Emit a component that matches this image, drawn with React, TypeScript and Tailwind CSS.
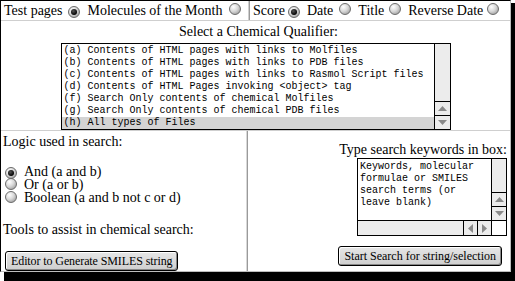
import React from "react";

const serif = { fontFamily: '"Liberation Serif", "Times New Roman", serif' };
const mono = { fontFamily: '"Liberation Mono", "Courier New", monospace' };

function Radio({ checked }: { checked?: boolean }) {
  return (
    <span className="inline-flex w-[12px] h-[12px] shrink-0 items-center justify-center rounded-full border border-[#6b6b6b] bg-[radial-gradient(circle_at_35%_30%,#ffffff_0%,#d8d8d8_45%,#8a8a8a_100%)]">
      {checked && <span className="block w-[6px] h-[6px] rounded-full bg-[radial-gradient(circle_at_40%_35%,#555_0%,#000_70%)]" />}
    </span>
  );
}

const items = [
  "(a) Contents of HTML pages with links to Molfiles",
  "(b) Contents of HTML pages with links to PDB files",
  "(c) Contents of HTML pages with links to Rasmol Script files",
  "(d) Contents of HTML Pages invoking <object> tag",
  "(f) Search Only contents of chemical Molfiles",
  "(g) Search Only contents of chemical PDB files",
  "(h) All types of Files",
];

function UpArrow() {
  return (
    <svg width="9" height="5" viewBox="0 0 9 5"><path d="M0 5 L4.5 0 L9 5 Z" fill="#8a8a8a" /></svg>
  );
}
function DownArrow() {
  return (
    <svg width="9" height="5" viewBox="0 0 9 5"><path d="M0 0 L4.5 5 L9 0 Z" fill="#8a8a8a" /></svg>
  );
}

export default function App() {
  return (
    <div className="w-[515px] h-[281px] bg-white overflow-hidden text-black" style={serif}>
      <div className="w-[511px] h-[272px] bg-white border-l border-t border-black border-r border-b border-r-[#bdbdbd] border-b-[#bdbdbd] shadow-[4px_3px_0_0_#000,4px_10px_0_0_#000] flex flex-col">
        {/* Row 1 */}
        <div className="flex h-[21px] border-b border-[#cfcfcf] text-[14px] leading-[16px]">
          <div className="w-[248px] flex items-center pl-[3px] border-r border-[#cfcfcf]">
            <span>Test pages</span>
            <span className="ml-[5px]"><Radio checked /></span>
            <span className="ml-[8px]">Molecules of the Month</span>
            <span className="ml-[7px]"><Radio /></span>
          </div>
          <div className="flex-1 flex items-center pl-[3px] border-l border-[#9a9a9a]">
            <span>Score</span>
            <span className="ml-[3px]"><Radio checked /></span>
            <span className="ml-[7px]">Date</span>
            <span className="ml-[6px]"><Radio /></span>
            <span className="ml-[7px]">Title</span>
            <span className="ml-[5px]"><Radio /></span>
            <span className="ml-[7px]">Reverse Date</span>
            <span className="ml-[4px]"><Radio /></span>
          </div>
        </div>
        {/* Row 2 */}
        <div className="flex flex-col items-center h-[111px] border-b border-[#cfcfcf] pt-[3px]">
          <div className="text-[14px] leading-[16px] ml-[6px]">Select a Chemical Qualifier:</div>
          <div className="mt-[3px] w-[390px] h-[87px] border border-black flex" style={mono}>
            <div className="flex-1 pt-[1px] text-[10px] leading-[12px] whitespace-pre">
              {items.map((t, i) => (
                <div key={i} className={"pl-[2px] " + (i === items.length - 1 ? "bg-[#d4d4d4]" : "")}>{t}</div>
              ))}
            </div>
            <div className="w-[16px] border-l border-black bg-[#ececec] flex flex-col justify-end">
              <div className="h-[14px] border-t border-black flex items-center justify-center"><UpArrow /></div>
              <div className="h-[14px] border-t border-black flex items-center justify-center"><DownArrow /></div>
            </div>
          </div>
        </div>
        {/* Row 3 */}
        <div className="flex flex-1">
          <div className="w-[246px] border-r border-[#d8d8d8] pl-[2px] pt-[3px] text-[14px] leading-[16px] flex flex-col">
            <div>Logic used in search:</div>
            <div className="mt-[15px] flex flex-col leading-[13px]">
              <div className="flex items-center h-[13px]"><span className="ml-[2px]"><Radio checked /></span><span className="ml-[7px]">And (a and b)</span></div>
              <div className="flex items-center h-[13px]"><span className="ml-[2px]"><Radio /></span><span className="ml-[7px]">Or (a or b)</span></div>
              <div className="flex items-center h-[13px]"><span className="ml-[2px]"><Radio /></span><span className="ml-[7px]">Boolean (a and b not c or d)</span></div>
            </div>
            <div className="mt-[18px]">Tools to assist in chemical search:</div>
            <button className="mt-[13px] ml-[2px] self-start h-[20px] px-[5px] rounded-[3px] border border-black bg-[linear-gradient(#e6e6e6,#cfcfcf)] shadow-[inset_-1px_-1px_0_#888,inset_1px_1px_0_#fff] text-[12px] leading-[14px] tracking-[-0.1px]" style={serif}>
              Editor to Generate SMILES string
            </button>
          </div>
          <div className="flex-1 border-l border-[#9a9a9a] flex flex-col items-end pr-[3px] pt-[11px] text-[14px] leading-[16px]">
            <div>Type search keywords in box:</div>
            <div className="mt-[0px] w-[150px] h-[78px] border border-black flex flex-col" style={mono}>
              <div className="flex flex-1">
                <div className="flex-1 pl-[2px] pt-[2px] text-[10px] leading-[12px] whitespace-pre">
                  {"Keywords, molecular\nformulae or SMILES\nsearch terms (or\nleave blank)"}
                </div>
                <div className="w-[15px] border-l border-black bg-[#ececec] flex flex-col justify-end">
                  <div className="h-[14px] border-t border-black flex items-center justify-center"><UpArrow /></div>
                  <div className="h-[14px] border-t border-black flex items-center justify-center"><DownArrow /></div>
                </div>
              </div>
              <div className="h-[15px] border-t border-black flex">
                <div className="flex-1 bg-[#ececec] flex justify-end">
                  <div className="w-[14px] border-l border-black flex items-center justify-center"><svg width="5" height="9" viewBox="0 0 5 9"><path d="M5 0 L0 4.5 L5 9 Z" fill="#8a8a8a" /></svg></div>
                  <div className="w-[14px] border-l border-black flex items-center justify-center"><svg width="5" height="9" viewBox="0 0 5 9"><path d="M0 0 L5 4.5 L0 9 Z" fill="#8a8a8a" /></svg></div>
                </div>
                <div className="w-[15px] border-l border-black bg-white" />
              </div>
            </div>
            <button className="mt-[10px] mr-[5px] h-[20px] px-[5px] rounded-[3px] border border-black bg-[linear-gradient(#e6e6e6,#cfcfcf)] shadow-[inset_-1px_-1px_0_#888,inset_1px_1px_0_#fff] text-[12px] leading-[14px]" style={serif}>
              Start Search for string/selection
            </button>
          </div>
        </div>
      </div>
    </div>
  );
}
